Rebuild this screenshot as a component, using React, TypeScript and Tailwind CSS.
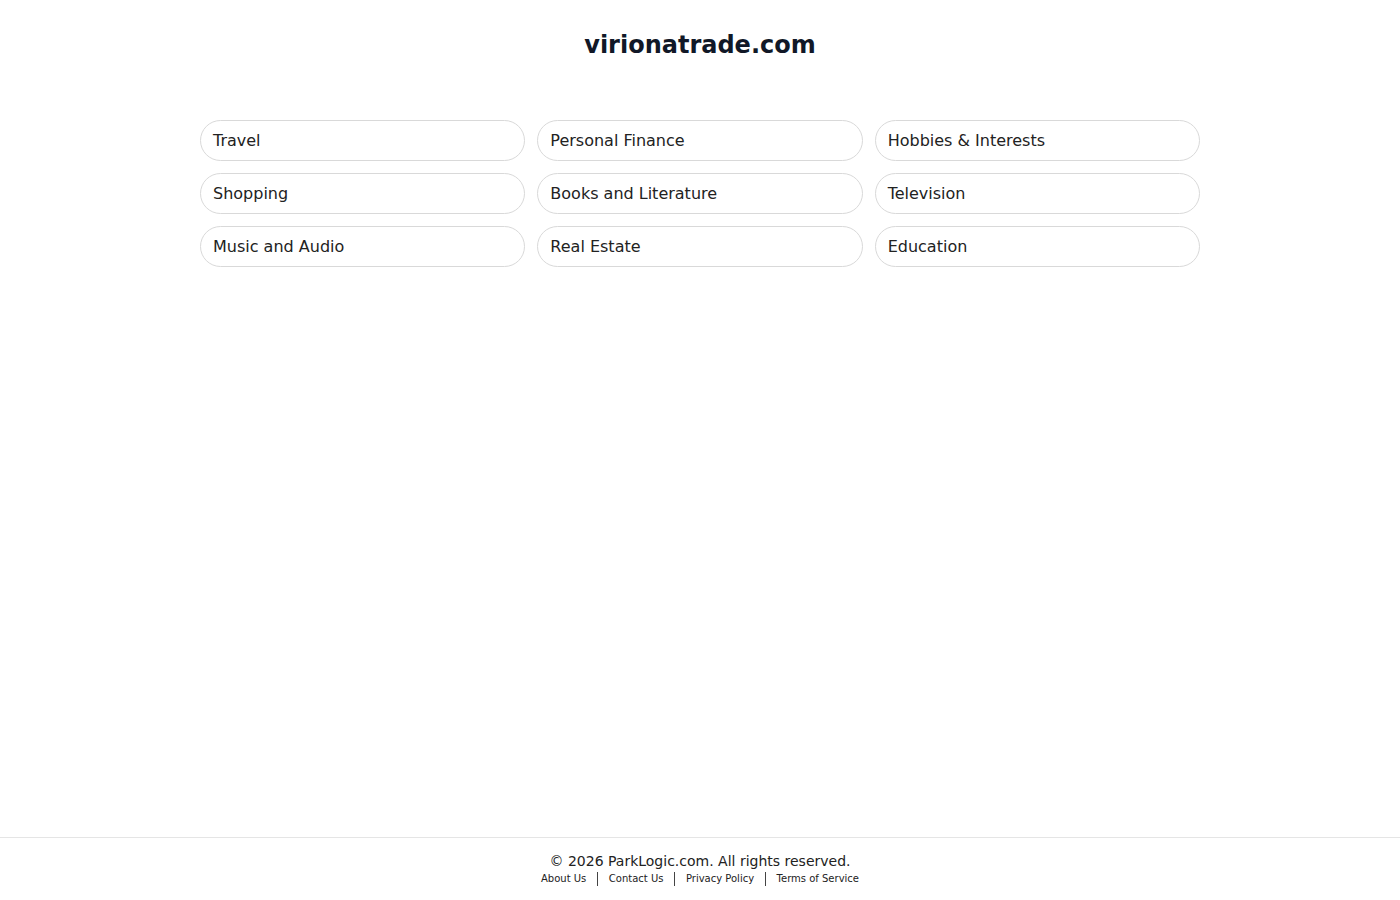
const categories = [
  "Travel",
  "Personal Finance",
  "Hobbies & Interests",
  "Shopping",
  "Books and Literature",
  "Television",
  "Music and Audio",
  "Real Estate",
  "Education",
];

const footerLinks = ["About Us", "Contact Us", "Privacy Policy", "Terms of Service"];

export default function App() {
  return (
    <div className="min-h-screen flex flex-col bg-white text-[#1a1a1a] font-['DejaVu_Sans',sans-serif]">
      <main className="flex-1">
        <h1 className="text-center text-[24px] font-bold text-[#111827] pt-[29px] leading-[32px]">
          virionatrade.com
        </h1>

        {/* category pills */}
        <div className="w-[1000px] mx-auto mt-[59px] grid grid-cols-3 gap-x-[12px] gap-y-[12px]">
          {categories.map((c) => (
            <a
              key={c}
              href="#"
              className="h-[41px] flex items-center px-[12px] rounded-full border border-[#d9d9d9] text-[16px] text-[#222]"
            >
              {c}
            </a>
          ))}
        </div>
      </main>

      <footer className="border-t border-[#e5e5e5] h-[63px] pt-[14px] text-center">
        <p className="text-[14px] leading-[18px] text-[#222]">© 2026 ParkLogic.com. All rights reserved.</p>
        <div className="flex justify-center items-center text-[10px] leading-[16px] text-[#222] mt-[1px]">
          {footerLinks.map((l, i) => (
            <span key={l} className="flex items-center">
              {i > 0 && <span className="mx-[10.5px] w-[1.5px] h-[14px] bg-[#444]" />}
              <a href="#">{l}</a>
            </span>
          ))}
        </div>
      </footer>
    </div>
  );
}
